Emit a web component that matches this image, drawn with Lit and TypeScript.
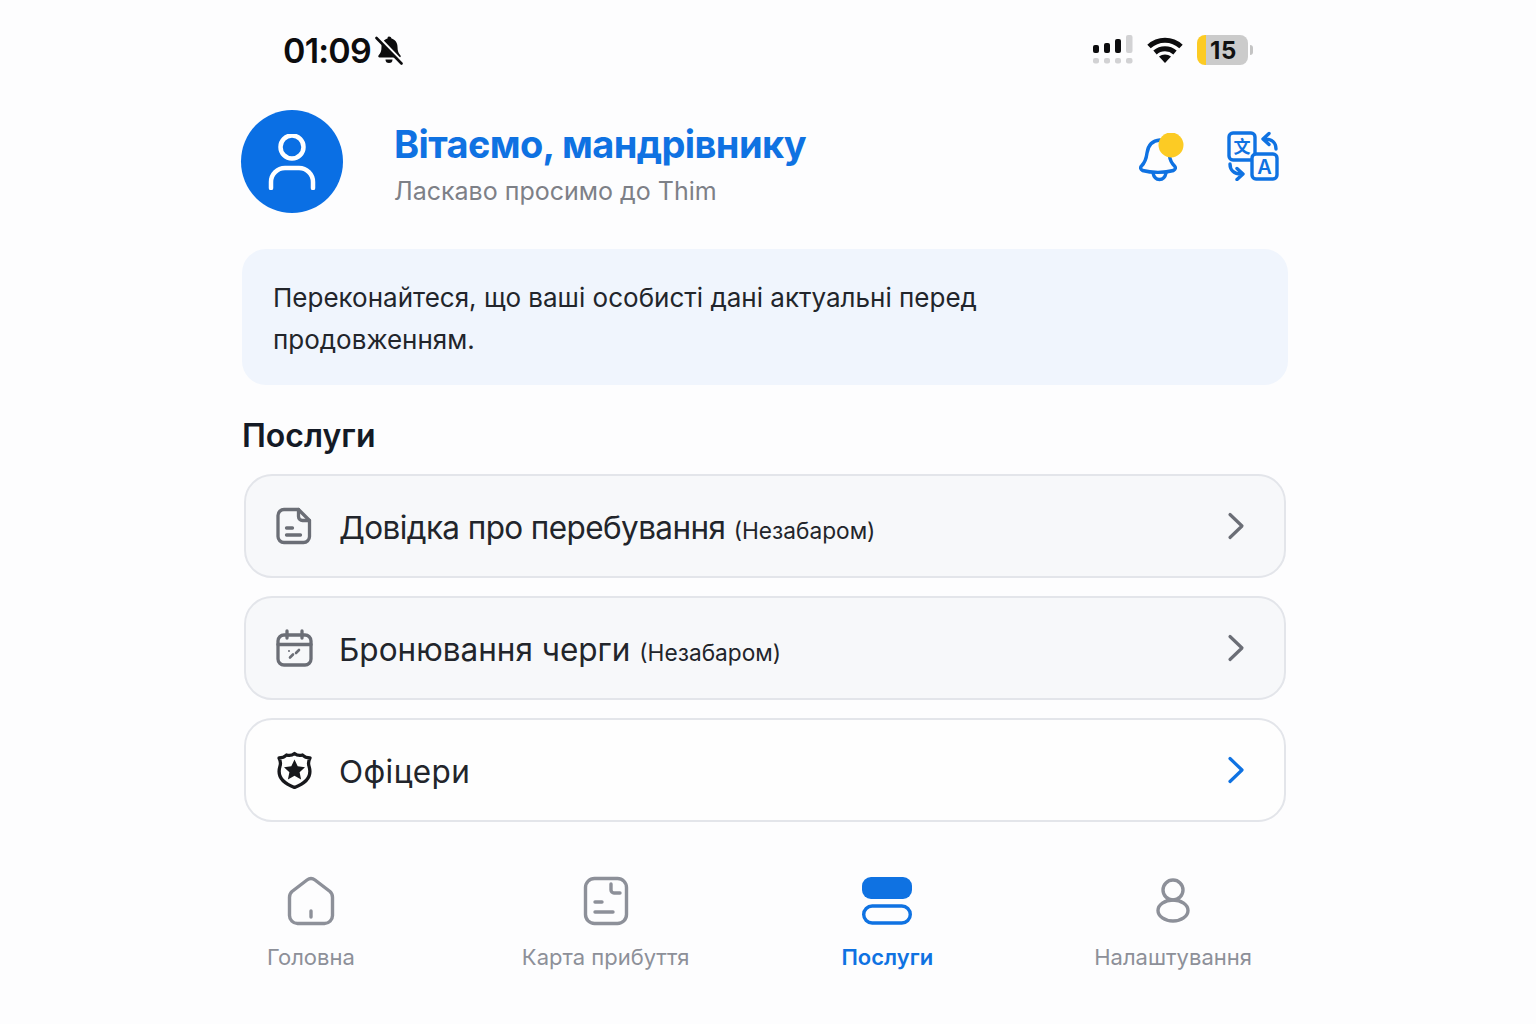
import { LitElement, html, css, svg } from 'lit'
import { customElement } from 'lit/decorators.js'

const docIcon = svg`
  <path d="M8 2.500h14.500l11 11v16a6 6 0 0 1-6 6H8a6 6 0 0 1-6-6v-21a6 6 0 0 1 6-6z" />
  <path d="M22.500 2.500v7a4 4 0 0 0 4 4h7" />
  <path d="M10.500 21h6M10.500 28h14" />
`

const calendarIcon = svg`
  <rect x="2" y="6" width="33" height="30" rx="6" />
  <path d="M2 15.500h33M11 2v7M26 2v7" />
  <path d="M14 28.500l3-3M20 24l3-3" stroke-width="2.600" />
  <circle cx="13" cy="22" r="1" fill="currentColor" stroke="none" />
`

const shieldIcon = svg`
  <path d="M18.500 2.500c-2.500 2-5 2.400-8 1.500-1.800 2-4.300 3-7.500 3 1.600 3 2 5.500.9 8.500-2.600 8.500 1.100 16 14.600 21 13.500-5 17.200-12.500 14.600-21-1.100-3-.7-5.500.9-8.500-3.200 0-5.700-1-7.500-3-3 .9-5.500.5-8-1.500z" />
  <path fill="currentColor" stroke="none" d="M18.500 8.500l3.200 6.800 7.300.9-5.400 5 1.500 7.300-6.600-3.700-6.600 3.700 1.500-7.300-5.400-5 7.300-.9z" />
`

const services = [
  { icon: docIcon, name: 'Довідка про перебування', soon: true, track: -0.6 },
  { icon: calendarIcon, name: 'Бронювання черги', soon: true, track: 0 },
  { icon: shieldIcon, name: 'Офіцери', soon: false, track: 0.4 },
]

@customElement('app-root')
export class AppRoot extends LitElement {
  static styles = css`
    :host {
      display: block;
      height: 1024px;
      background: #fdfdfe;
      font-family: Inter, 'Noto Sans', sans-serif;
      overflow: hidden;
    }

    .page {
      width: 1046px;
      margin-left: 242px;
    }

    .status {
      height: 110px;
      box-sizing: border-box;
      padding: 30px 35px 0 41px;
      display: flex;
      justify-content: space-between;
      align-items: flex-start;
    }

    .status-left,
    .status-right {
      display: flex;
      align-items: center;
      height: 40px;
    }

    .time {
      font-size: 34px;
      font-weight: 600;
      color: #0c0c0e;
      letter-spacing: -0.8px;
    }

    .mute {
      width: 30px;
      height: 30px;
      margin-left: 3px;
    }

    .signal {
      width: 40px;
      height: 30px;
    }

    .wifi {
      width: 36px;
      height: 28px;
      margin-left: 14px;
    }

    .battery {
      display: flex;
      align-items: center;
      margin-left: 14px;
    }

    .battery-body {
      width: 51px;
      height: 30px;
      border-radius: 8px;
      background: linear-gradient(90deg, #fccb24 0 9px, #cbcbcb 9px);
      display: flex;
      align-items: center;
      justify-content: center;
      font-size: 24px;
      font-weight: 700;
      letter-spacing: 0.6px;
      color: #111;
      padding-left: 2px;
      box-sizing: border-box;
    }

    .battery-cap {
      width: 3px;
      height: 10px;
      margin-left: 2px;
      border-radius: 0 3px 3px 0;
      background: #c4c4c4;
    }

    .header {
      height: 103px;
      display: flex;
      align-items: center;
    }

    .avatar {
      width: 102px;
      height: 103px;
      margin-left: -1px;
      border-radius: 50%;
      background: #0a6fe4;
      display: flex;
      align-items: center;
      justify-content: center;
      flex: none;
    }

    .avatar svg {
      width: 50px;
      height: 56px;
    }

    .greeting {
      margin-left: 51px;
      flex: 1;
      padding-top: 4px;
    }

    .title {
      font-size: 38px;
      font-weight: 700;
      line-height: 46px;
      color: #0f72e2;
      letter-spacing: -0.6px;
    }

    .subtitle {
      margin-top: 8px;
      font-size: 25px;
      line-height: 32px;
      color: #7d8087;
    }

    .actions {
      display: flex;
      align-items: center;
      padding-right: 9px;
      padding-bottom: 12px;
    }

    .bell {
      width: 48px;
      height: 50px;
      margin: 4px 40px 0 0;
    }

    .translate {
      width: 52px;
      height: 50px;
    }

    .notice {
      margin-top: 36px;
      padding: 28px 30px 23px 31px;
      height: 136px;
      box-sizing: border-box;
      border-radius: 24px;
      background: #f0f5fd;
      font-size: 26px;
      line-height: 42px;
      color: #22252b;
    }

    .section-title {
      margin: 31px 0 18px;
      font-size: 32px;
      line-height: 40px;
      font-weight: 600;
      color: #141a26;
    }

    .cards {
      display: flex;
      flex-direction: column;
      gap: 18px;
      margin: 0 2px;
    }

    .card {
      height: 104px;
      box-sizing: border-box;
      border: 2px solid #e3e5ea;
      border-radius: 28px;
      background: #f7f8fa;
      display: flex;
      align-items: center;
      padding: 0 39px 0 30px;
      color: #6b6e76;
    }

    .card.active {
      background: #fefefe;
      color: #0f72e2;
    }

    .card-icon {
      width: 37px;
      height: 38px;
      flex: none;
    }

    .card.active .card-icon {
      color: #17181c;
    }

    .card-label {
      flex: 1;
      margin-left: 26px;
      font-size: 31.500px;
      color: #22252b;
      padding-top: 3px;
    }

    .card-label small {
      font-size: 22.700px;
      letter-spacing: 0;
    }

    .chevron {
      width: 18px;
      height: 28px;
    }

    .nav {
      margin-top: 54px;
      display: flex;
      padding-left: 25px;
    }

    .nav-item {
      display: flex;
      flex-direction: column;
      align-items: center;
      color: #8d9099;
      font-size: 22px;
    }

    .nav-item:nth-child(2) {
      margin-left: 167px;
    }

    .nav-item:nth-child(3) {
      margin-left: 152px;
    }

    .nav-item:nth-child(4) {
      margin-left: 161px;
    }

    .nav-item svg {
      height: 50px;
      width: 52px;
    }

    .nav-item span {
      margin-top: 16px;
      line-height: 30px;
    }

    .nav-item.active {
      color: #0f72e2;
      font-weight: 600;
    }

    svg {
      display: block;
      fill: none;
      stroke: currentColor;
      stroke-linecap: round;
      stroke-linejoin: round;
    }
  `

  private _renderStatus() {
    return html`
      <div class="status">
        <div class="status-left">
          <div class="time">01:09</div>
          <svg class="mute" viewBox="0 0 30 30" style="color:#0c0c0e">
            <path fill="currentColor" stroke="none" d="M15 1.500c1.300 0 2.300.9 2.500 2 3.700 1 6 4.200 6 8.300 0 4.500 1 6.400 3 8.700.6.800.1 2-1 2H5.500c-1.100 0-1.600-1.200-1-2 2-2.300 3-4.200 3-8.700 0-4.100 2.300-7.300 6-8.300.2-1.100.2-2 1.500-2z" />
            <path fill="currentColor" stroke="none" d="M11.500 24.500h7a3.500 3.500 0 0 1-7 0z" />
            <path stroke="#fdfdfe" stroke-width="4" d="M4 2.500l24 25" />
            <path stroke-width="2.600" d="M2.500 3l25 25.500" />
          </svg>
        </div>
        <div class="status-right">
          <svg class="signal" viewBox="0 0 40 30">
            <g stroke="none" fill="#0c0c0e">
              <rect x="0" y="10" width="6" height="8" rx="2" />
              <rect x="11" y="8" width="6" height="10" rx="2" />
              <rect x="22" y="4" width="6" height="14" rx="2" />
            </g>
            <g stroke="none" fill="#d2d2d4">
              <rect x="33" y="0" width="6.500" height="18" rx="2" />
              <rect x="0" y="23" width="6" height="5.500" rx="2" />
              <rect x="11" y="23" width="6" height="5.500" rx="2" />
              <rect x="22" y="23" width="6" height="5.500" rx="2" />
              <rect x="33" y="23" width="6.500" height="5.500" rx="2" />
            </g>
          </svg>
          <svg class="wifi" viewBox="0 0 36 28" style="color:#0c0c0e">
            <path stroke-width="5" stroke-linecap="butt" d="M2 10.500c9-8.400 23-8.400 32 0" />
            <path stroke-width="5" stroke-linecap="butt" d="M8 16.500c5.700-5 14.300-5 20 0" />
            <path fill="currentColor" stroke="none" d="M12 20.500c3.600-2.800 8.400-2.800 12 0l-6 6.500z" />
          </svg>
          <div class="battery">
            <div class="battery-body">15</div>
            <div class="battery-cap"></div>
          </div>
        </div>
      </div>
    `
  }

  private _renderHeader() {
    return html`
      <div class="header">
        <div class="avatar">
          <svg viewBox="0 0 50 56" style="color:#fff" stroke-width="4.500">
            <circle cx="25" cy="13" r="11.500" />
            <path d="M4 54v-6a14 14 0 0 1 14-14h14a14 14 0 0 1 14 14v6" />
          </svg>
        </div>
        <div class="greeting">
          <div class="title">Вітаємо, мандрівнику</div>
          <div class="subtitle">Ласкаво просимо до Thim</div>
        </div>
        <div class="actions">
          <svg class="bell" viewBox="0 0 48 50" style="color:#0f72e2" stroke-width="3.400">
            <path d="M21 7c-8 .5-12 6-13 13-.6 5-1.500 9-5.500 13-1.500 1.500-1 3.500 1 4.500 9 2.500 22 2.500 31 0 2-1 2.500-3 1-4.500-3-3-4.500-6-5-10" />
            <path d="M14 40c1 5 4 6.500 6.500 6.500s5.500-1.500 6.500-6.500" />
            <circle cx="32" cy="12" r="12.500" fill="#fccb24" stroke="none" />
          </svg>
          <svg class="translate" viewBox="0 0 52 50" style="color:#0f72e2" stroke-width="3.400">
            <rect x="2" y="2" width="26" height="27" rx="4" />
            <rect x="25" y="23" width="25" height="25" rx="4" fill="#fdfdfe" />
            <text x="15" y="22" text-anchor="middle" font-size="17" font-weight="700" fill="currentColor" stroke="none" font-family="'Noto Sans CJK SC', sans-serif">文</text>
            <text x="37.500" y="43" text-anchor="middle" font-size="20" font-weight="600" fill="currentColor" stroke="none" font-family="Inter, sans-serif">A</text>
            <path d="M49 18c0-6-4-10-11-10M42 2.500l-6 5.500 6 5.500" />
            <path d="M3 33c0 6 4 10 11 10M10 37.500l6 5.500-6 5.500" />
          </svg>
        </div>
      </div>
    `
  }

  private _renderNav() {
    return html`
      <div class="nav">
        <div class="nav-item">
          <svg viewBox="0 0 52 50" stroke-width="3.400">
            <path d="M7 15.500l15-11.500c2.500-2 5.500-2 8 0l15 11.500c2 1.700 2.500 3.500 2.500 6v18a8 8 0 0 1-8 8h-27a8 8 0 0 1-8-8v-18c0-2.500.5-4.300 2.500-6z" />
            <path d="M26 35v6" />
          </svg>
          <span>Головна</span>
        </div>
        <div class="nav-item">
          <svg viewBox="0 0 52 50" stroke-width="3.400">
            <rect x="5.500" y="2.500" width="41" height="45" rx="9" />
            <path d="M31 8v6a3 3 0 0 0 3 3h6M15 26h7M15 36h18" />
          </svg>
          <span>Карта прибуття</span>
        </div>
        <div class="nav-item active">
          <svg viewBox="0 0 52 50" stroke-width="3.400">
            <rect x="1" y="1" width="50" height="22" rx="9" fill="currentColor" stroke="none" />
            <rect x="2.700" y="30" width="46.600" height="17" rx="8.500" />
          </svg>
          <span>Послуги</span>
        </div>
        <div class="nav-item">
          <svg viewBox="0 0 52 50" stroke-width="3.400">
            <circle cx="26" cy="14" r="10" />
            <ellipse cx="26" cy="34.500" rx="15" ry="10.500" />
          </svg>
          <span>Налаштування</span>
        </div>
      </div>
    `
  }

  render() {
    return html`
      <div class="page">
        ${this._renderStatus()}
        ${this._renderHeader()}
        <div class="notice">Переконайтеся, що ваші особисті дані актуальні перед<br />продовженням.</div>
        <div class="section-title">Послуги</div>
        <div class="cards">
          ${services.map(s => html`
            <div class="card ${s.soon ? '' : 'active'}">
              <svg class="card-icon" viewBox="0 0 37 38" stroke-width="3.300">${s.icon}</svg>
              <div class="card-label" style="letter-spacing:${s.track}px">${s.name}${s.soon ? html` <small>(Незабаром)</small>` : ''}</div>
              <svg class="chevron" viewBox="0 0 18 28" stroke-width="3.200"><path d="M3 2.500l12 11.500-12 11.500" /></svg>
            </div>
          `)}
        </div>
        ${this._renderNav()}
      </div>
    `
  }
}

declare global {
  interface HTMLElementTagNameMap {
    'app-root': AppRoot
  }
}
